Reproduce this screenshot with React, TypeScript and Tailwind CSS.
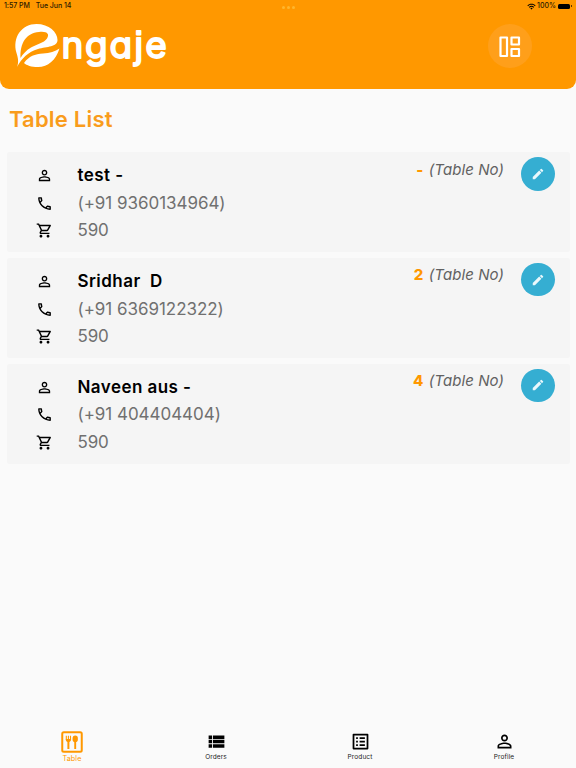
import React from "react";
import {
  MdPersonOutline,
  MdOutlinePhone,
  MdOutlineShoppingCart,
  MdEdit,
  MdViewList,
  MdOutlineListAlt,
  MdWifi,
} from "react-icons/md";

const tables = [
  { name: "test -", phone: "(+91 9360134964)", total: "590", no: "-" },
  { name: "Sridhar  D", phone: "(+91 6369122322)", total: "590", no: "2" },
  { name: "Naveen aus -", phone: "(+91 404404404)", total: "590", no: "4" },
];

function StatusBar() {
  return (
    <div className="relative flex h-[12px] items-center justify-between pl-[4px] pr-[4px] text-[7px] font-medium leading-[12px] text-[#2b1a00]">
      <div className="flex gap-[6px]">
        <span className="tracking-[-0.05px]">1:57 PM</span>
        <span className="tracking-[-0.05px]">Tue Jun 14</span>
      </div>
      <div className="absolute left-[282px] top-[6px] flex gap-[2.5px]">
        <i className="size-[2.5px] rounded-full bg-[#ffb62e]" />
        <i className="size-[2.5px] rounded-full bg-[#ffb62e]" />
        <i className="size-[2.5px] rounded-full bg-[#ffb62e]" />
      </div>
      <div className="flex items-center">
        <MdWifi className="size-[9px] text-black" />
        <span className="ml-[1px]">100%</span>
        <span className="ml-[2px] h-[5px] w-[12px] rounded-[1.5px] bg-black" />
        <span className="ml-[1px] h-[2px] w-[1px] bg-[#5b3700]" />
      </div>
    </div>
  );
}

function Logo() {
  return (
    <svg className="h-[52px] w-[160px]" viewBox="10 18 160 52" fill="none">
      <path
        fill="#fff"
        d="M17 67C19 62 18 58 16.500 53C12 37 22 24 36.500 24C49 24 57.500 32 57.500 40C57.500 47 47 46.500 38 49C28 52 22 58 17 67Z"
      />
      <path
        fill="#ff9800"
        d="M20.500 58C20 43 26 33 39 32C47 31 50 34 47 38.500C44 43 36 44.500 31 47.500C26 50.500 23 54 20.500 58Z"
      />
      <path
        fill="#fff"
        d="M24 63C29 56 35 54 43 53.500C50 53 55 51.500 59.500 48.500C56 60 48 67 38 67C31 67 27 65.500 24 63Z"
      />
      <text
        x="61.500 85 109.500 134.300 145.300"
        y="58"
        fill="#fff"
        stroke="#fff"
        strokeWidth="1.800"
        strokeLinejoin="round"
        className="font-[Inter,sans-serif] text-[37px] font-normal [font-feature-settings:'cv11','ss07']"
      >
        ngaje
      </text>
    </svg>
  );
}

function TableCard({ t }: { t: (typeof tables)[number] }) {
  return (
    <article className="flex h-[100px] rounded-[2px] bg-[#f5f5f5] pl-[29.5px] pr-[15px]">
      <div className="grid grow auto-rows-[27.5px] grid-cols-[41.5px_1fr] content-start items-center pt-[10px] text-[17px] leading-[27px]">
        <MdPersonOutline className="size-[17px] text-black" />
        <span className="whitespace-pre font-semibold tracking-[0.45px] text-black">{t.name}</span>
        <MdOutlinePhone className="size-[17px] text-black" />
        <span className="tracking-[-0.04px] text-[#707070]">{t.phone}</span>
        <MdOutlineShoppingCart className="size-[17px] text-black" />
        <span className="tracking-[-0.2px] text-[#707070]">{t.total}</span>
      </div>
      <div className="flex gap-[5.500px] pt-[6.700px] text-[15px] leading-[22px]">
        <b className="font-extrabold text-[#ff9800]">{t.no}</b>
        <em className="tracking-[0.080px] text-[#616161]">(Table No)</em>
      </div>
      <button className="ml-[17px] mt-[5px] flex size-[33.500px] items-center justify-center rounded-full bg-[#35aed2]">
        <MdEdit className="size-[14px] text-[#e9f8fc]" />
      </button>
    </article>
  );
}

function DiningIcon() {
  return (
    <svg className="size-[22px]" viewBox="0 0 22 22" fill="none">
      <rect x="1.25" y="1.25" width="19.5" height="19.5" rx="1.5" stroke="#ff9800" strokeWidth="2" />
      <path stroke="#ff9800" strokeWidth="1.1" d="M5.3 4.8v4M7.4 4.8v4M9.5 4.8v4" />
      <path fill="#ff9800" d="M4.8 8h5.3c0 1.8-.7 2.6-1.7 2.9V18h-2v-7.1C5.3 10.600 4.8 9.800 4.800 8Z" />
      <ellipse cx="14.2" cy="7.900" rx="2.700" ry="3.300" fill="#ff9800" />
      <path stroke="#ff9800" strokeWidth="1.900" d="M14.200 10v8" />
    </svg>
  );
}

export default function App() {
  return (
    <div className="flex h-[768px] w-[576px] flex-col overflow-hidden bg-[#fafafa] font-[Inter,'Liberation_Sans',sans-serif]">
      <header className="h-[89px] rounded-b-[9px] bg-[#ff9800]">
        <StatusBar />
        <div className="flex justify-between pl-[10px] pr-[44px] pt-[6px]">
          <Logo />
          <button className="mt-[6px] flex size-[44px] items-center justify-center rounded-full bg-[#ff9f1a]">
            <svg className="mt-[2px] size-[22px]" viewBox="0 0 22 22" fill="none" stroke="#fff" strokeWidth="2.200" strokeLinejoin="round">
              <rect x="1.500" y="1.500" width="6.500" height="18.500" />
              <rect x="12.500" y="1.500" width="7.500" height="7" />
              <rect x="12.500" y="13" width="7.500" height="7" />
            </svg>
          </button>
        </div>
      </header>
      <main className="grow">
        <h1 className="pl-[9px] pt-[14px] text-[22px] font-semibold leading-[32px] tracking-[0.200px] text-[#f99c1c]">Table List</h1>
        <section className="flex flex-col gap-[5.800px] px-[6.500px] pt-[17px]">
          {tables.map((t) => (
            <TableCard key={t.phone} t={t} />
          ))}
        </section>
      </main>
      <nav className="grid h-[48px] grid-cols-4 text-[6.500px] leading-[9px] text-[#222]">
        <div className="flex flex-col items-center pt-[10.500px] text-[7.200px] tracking-[0.150px] text-[#ff9800]">
          <DiningIcon />
          <span className="mt-[1.500px]">Table</span>
        </div>
        <div className="flex flex-col items-center pt-[11px] tracking-[0.100px]">
          <MdViewList className="size-[21px] text-black" />
          <span className="mt-[1px]">Orders</span>
        </div>
        <div className="flex flex-col items-center pt-[11px] tracking-[0.100px]">
          <MdOutlineListAlt className="size-[21px] text-black" />
          <span className="mt-[1px]">Product</span>
        </div>
        <div className="flex flex-col items-center pt-[11px] tracking-[0.100px]">
          <MdPersonOutline className="size-[21px] text-black" />
          <span className="mt-[1px]">Profile</span>
        </div>
      </nav>
    </div>
  );
}
